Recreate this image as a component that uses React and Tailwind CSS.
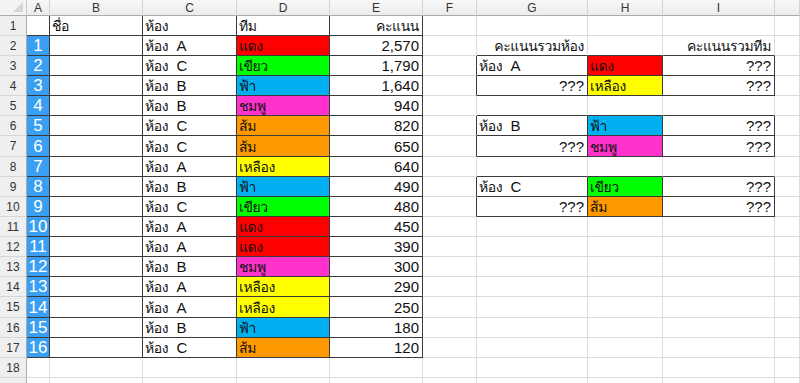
import React from 'react';

const COLS = ['w-[27px]', 'w-[23px]', 'w-[93px]', 'w-[94px]', 'w-[93px]', 'w-[93px]', 'w-[54px]', 'w-[111px]', 'w-[75px]', 'w-[112px]', 'flex-1'];
const LETTERS = ['', 'A', 'B', 'C', 'D', 'E', 'F', 'G', 'H', 'I', ''];

const TEAM_BG = {
    'แดง': 'bg-[#ff0000]',
    'เขียว': 'bg-[#00ff00]',
    'ฟ้า': 'bg-[#00b0f0]',
    'ชมพู': 'bg-[#ff33cc]',
    'ส้ม': 'bg-[#ff9900]',
    'เหลือง': 'bg-[#ffff00]',
};

const SCORES = [
    ['A', 'แดง', '2,570'],
    ['C', 'เขียว', '1,790'],
    ['B', 'ฟ้า', '1,640'],
    ['B', 'ชมพู', '940'],
    ['C', 'ส้ม', '820'],
    ['C', 'ส้ม', '650'],
    ['A', 'เหลือง', '640'],
    ['B', 'ฟ้า', '490'],
    ['C', 'เขียว', '480'],
    ['A', 'แดง', '450'],
    ['A', 'แดง', '390'],
    ['B', 'ชมพู', '300'],
    ['A', 'เหลือง', '290'],
    ['A', 'เหลือง', '250'],
    ['B', 'ฟ้า', '180'],
    ['C', 'ส้ม', '120'],
];

// summary blocks on the right: [first row, room, team1, team2]
const SUMMARY = [
    [3, 'A', 'แดง', 'เหลือง'],
    [6, 'B', 'ฟ้า', 'ชมพู'],
    [9, 'C', 'เขียว', 'ส้ม'],
];

const cellAt = (r, c) => {
    if (r === 1) {
        if (c === 2) return { text: 'ชื่อ' };
        if (c === 3) return { text: 'ห้อง' };
        if (c === 4) return { text: 'ทีม' };
        if (c === 5) return { text: 'คะแนน', right: true };
    }
    if (r === 2 && c === 7) return { text: 'คะแนนรวมห้อง', right: true };
    if (r === 2 && c === 9) return { text: 'คะแนนรวมทีม', right: true };
    if (r >= 2 && r <= 17) {
        const [room, team, score] = SCORES[r - 2];
        if (c === 1) return { text: String(r - 1), num: true };
        if (c === 3) return { text: `ห้อง\u00a0\u00a0${room}` };
        if (c === 4) return { text: team, bg: TEAM_BG[team] };
        if (c === 5) return { text: score, right: true };
    }
    for (const [start, room, t1, t2] of SUMMARY) {
        if (r === start) {
            if (c === 7) return { text: `ห้อง\u00a0\u00a0${room}` };
            if (c === 8) return { text: t1, bg: TEAM_BG[t1] };
            if (c === 9) return { text: '???', right: true };
        }
        if (r === start + 1) {
            if (c === 7) return { text: '???', right: true };
            if (c === 8) return { text: t2, bg: TEAM_BG[t2] };
            if (c === 9) return { text: '???', right: true };
        }
    }
    return null;
};

const inBlock = (r, c) =>
    (r >= 2 && r <= 17 && c >= 1 && c <= 5) ||
    (r === 1 && c >= 2 && c <= 5) ||
    ([3, 4, 6, 7, 9, 10].includes(r) && c >= 7 && c <= 9);

// thai runs get a slightly tighter size so they take the width they do in the sheet
const CellText = ({ text }) =>
    text.split(/([\u0E00-\u0E7F]+)/).filter(Boolean).map((part, i) =>
        /[\u0E00-\u0E7F]/.test(part)
            ? <span key={i} className="text-[14px] tracking-[-0.4px]">{part}</span>
            : <span key={i}>{part}</span>
    );

const Corner = () => (
    <div className="w-[27px] h-full shrink-0 bg-[#f3f3f3] border-r border-b border-r-[#c8c8c8] border-b-[#ababab] flex items-end justify-end pr-[3px] pb-[3px]">
        <svg width="10" height="10" viewBox="0 0 10 10">
            <polygon points="10,0 10,10 0,10" fill="#d6d6d6" />
        </svg>
    </div>
);

const HeaderRow = () => (
    <div className="flex h-[16px]">
        <Corner />
        {LETTERS.slice(1).map((l, i) => (
            <div
                key={i}
                className={`${COLS[i + 1]} shrink-0 h-full bg-gradient-to-b from-[#f7f7f7] to-[#ececec] border-r border-b border-r-[#d2d2d2] border-b-[#ababab] flex items-center justify-center text-[12px] leading-none text-[#333]`}>
                {l}
            </div>
        ))}
    </div>
);

const SheetRow = ({ r }) => {
    const tall = r === 7 || r === 15;
    return (
        <div className={`flex ${tall ? 'h-[21px]' : 'h-[20px]'}`}>
            <div className="w-[27px] shrink-0 h-full bg-[#efefef] border-r border-b border-r-[#ababab] border-b-[#d5d5d5] flex items-center justify-center text-[12px] leading-none text-[#333]">
                {r <= 18 ? r : ''}
            </div>
            {COLS.slice(1).map((w, i) => {
                const c = i + 1;
                const cell = cellAt(r, c);
                const rightDark = inBlock(r, c) || inBlock(r, c + 1);
                const bottomDark = inBlock(r, c) || inBlock(r + 1, c);
                const bg = cell?.num ? 'bg-[#3a9ff2]' : cell?.bg || 'bg-white';
                return (
                    <div
                        key={c}
                        className={`${w} shrink-0 h-full border-r border-b ${rightDark ? 'border-r-[#3a3a3a]' : 'border-r-[#dadcdd]'} ${bottomDark ? 'border-b-[#3a3a3a]' : 'border-b-[#dadcdd]'} ${bg} flex items-end overflow-visible whitespace-nowrap`}>
                        {cell && cell.num && (
                            <span className="w-full text-center text-white text-[17px] leading-[19px]">{cell.text}</span>
                        )}
                        {cell && !cell.num && (
                            <span className={`w-full text-[15px] leading-[18px] text-[#111] ${cell.right ? 'text-right pr-[3px]' : 'pl-[2px]'}`}>
                                <CellText text={cell.text} />
                            </span>
                        )}
                    </div>
                );
            })}
        </div>
    );
};

export default function App() {
    const rows = Array.from({ length: 19 }, (_, i) => i + 1);
    return (
        <div className="w-[800px] h-[383px] overflow-hidden bg-white font-['Liberation_Sans','Loma','Noto_Sans_Thai',sans-serif]">
            <HeaderRow />
            {rows.map(r => (
                <SheetRow key={r} r={r} />
            ))}
        </div>
    );
}
